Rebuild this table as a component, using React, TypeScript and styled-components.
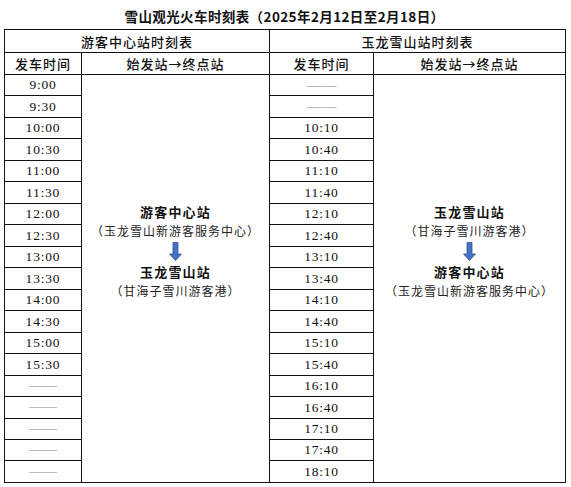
import styled, { createGlobalStyle } from "styled-components";

const GlobalStyle = createGlobalStyle`
  html, body {
    margin: 0;
    padding: 0;
    background: #ffffff;
  }
  body {
    font-family: "Liberation Serif", "Noto Sans CJK SC", serif;
    color: #111;
  }
`;

// empty string = no departure (shown as a dash)
const leftTimes = [
  "9:00", "9:30", "10:00", "10:30", "11:00", "11:30", "12:00", "12:30",
  "13:00", "13:30", "14:00", "14:30", "15:00", "15:30", "", "", "", "", "",
];

const rightTimes = [
  "", "", "10:10", "10:40", "11:10", "11:40", "12:10", "12:40", "13:10",
  "13:40", "14:10", "14:40", "15:10", "15:40", "16:10", "16:40", "17:10",
  "17:40", "18:10",
];

const Page = styled.div`
  width: 571px;
  padding: 0 0 0 4px;
  box-sizing: border-box;
`;

const Title = styled.h1`
  margin: 0;
  height: 29px;
  width: 561px;
  display: flex;
  align-items: center;
  justify-content: center;
  padding-top: 3px;
  box-sizing: border-box;
  font-family: "Noto Sans CJK SC", sans-serif;
  font-size: 13.5px;
  font-weight: 700;
  letter-spacing: 0.4px;
`;

const Table = styled.table`
  width: 561px;
  height: 453px;
  border-collapse: collapse;
  table-layout: fixed;
`;

const Row = styled.tr<{ $h: number }>`
  height: ${(p) => p.$h}px;
`;

const Cell = styled.td`
  border: 1px solid #111;
  padding: 0;
  text-align: center;
  vertical-align: middle;
`;

const HeadCell = styled(Cell)`
  font-family: "Noto Sans CJK SC", serif;
  font-size: 13px;
  font-weight: 500;
  letter-spacing: 1px;
  line-height: 1;
`;

const TimeCell = styled(Cell)`
  font-family: "Liberation Serif", serif;
  font-size: 13.5px;
  letter-spacing: 0.8px;
  line-height: 1;
`;

const Dash = styled.span<{ $small?: boolean }>`
  font-family: "Liberation Serif", serif;
  font-size: ${(p) => (p.$small ? 14 : 15)}px;
  color: #8a8a8a;
  letter-spacing: 0;
`;

const RouteCell = styled(Cell)`
  vertical-align: middle;
`;

const Route = styled.div`
  display: flex;
  flex-direction: column;
  align-items: center;
  padding-bottom: 54px;
  font-family: "Noto Sans CJK SC", serif;
`;

const Station = styled.div`
  font-size: 13px;
  font-weight: 700;
  letter-spacing: 1.2px;
  line-height: 19px;
`;

const Note = styled.div`
  font-size: 12px;
  letter-spacing: 1px;
  line-height: 19px;
  color: #222;
`;

const ArrowBox = styled.div`
  height: 22px;
  display: flex;
  align-items: center;
  justify-content: center;
`;

const DownArrow = () => (
  <ArrowBox>
    <svg width="13" height="19" viewBox="0 0 13 19">
      <path
        d="M4 0.5 H9 V12 H12.5 L6.5 18.5 L0.5 12 H4 Z"
        fill="#4472c4"
        stroke="#2f528f"
        strokeWidth="0.8"
      />
    </svg>
  </ArrowBox>
);

const RouteBlock = ({
  from,
  fromNote,
  to,
  toNote,
}: {
  from: string;
  fromNote: string;
  to: string;
  toNote: string;
}) => (
  <Route>
    <Station>{from}</Station>
    <Note>{fromNote}</Note>
    <DownArrow />
    <Station>{to}</Station>
    <Note>{toNote}</Note>
  </Route>
);

const timeContent = (t: string, small?: boolean) =>
  t ? t : <Dash $small={small}>——</Dash>;

const App = () => {
  const count = leftTimes.length;
  return (
    <Page>
      <GlobalStyle />
      <Title>雪山观光火车时刻表（2025年2月12日至2月18日）</Title>
      <Table>
        <colgroup>
          <col style={{ width: 77 }} />
          <col style={{ width: 188 }} />
          <col style={{ width: 104 }} />
          <col style={{ width: 192 }} />
        </colgroup>
        <tbody>
          <Row $h={23}>
            <HeadCell colSpan={2}>游客中心站时刻表</HeadCell>
            <HeadCell colSpan={2}>玉龙雪山站时刻表</HeadCell>
          </Row>
          <Row $h={22}>
            <HeadCell>发车时间</HeadCell>
            <HeadCell>始发站→终点站</HeadCell>
            <HeadCell>发车时间</HeadCell>
            <HeadCell>始发站→终点站</HeadCell>
          </Row>
          {leftTimes.map((lt, i) => (
            <Row $h={408 / count} key={i}>
              <TimeCell>{timeContent(lt, true)}</TimeCell>
              {i === 0 && (
                <RouteCell rowSpan={count}>
                  <RouteBlock
                    from="游客中心站"
                    fromNote="（玉龙雪山新游客服务中心）"
                    to="玉龙雪山站"
                    toNote="（甘海子雪川游客港）"
                  />
                </RouteCell>
              )}
              <TimeCell>{timeContent(rightTimes[i])}</TimeCell>
              {i === 0 && (
                <RouteCell rowSpan={count}>
                  <RouteBlock
                    from="玉龙雪山站"
                    fromNote="（甘海子雪川游客港）"
                    to="游客中心站"
                    toNote="（玉龙雪山新游客服务中心）"
                  />
                </RouteCell>
              )}
            </Row>
          ))}
        </tbody>
      </Table>
    </Page>
  );
};

export default App;
